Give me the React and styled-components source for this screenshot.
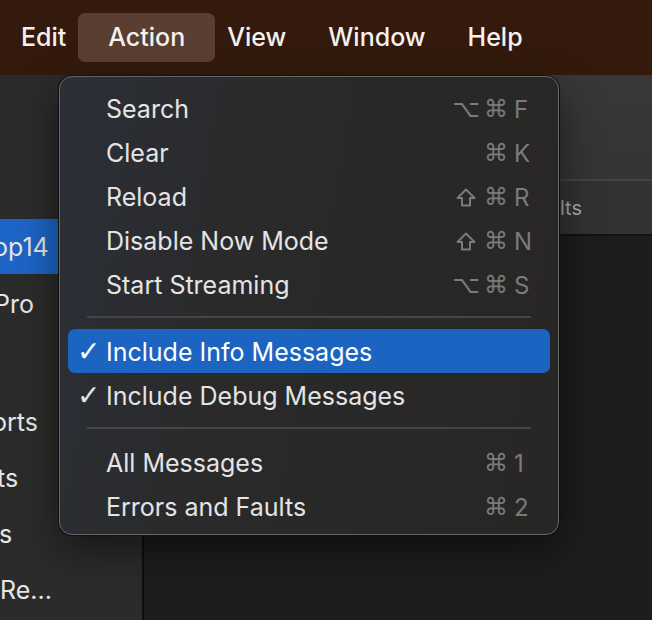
import React from 'react'
import styled, { createGlobalStyle } from 'styled-components'

const GlobalStyle = createGlobalStyle`
  body {
    margin: 0;
    background: #1d1d1d;
    font-family: Inter, "Noto Sans", "DejaVu Sans", sans-serif;
  }
`

const menuBarItems = ['Edit', 'Action', 'View', 'Window', 'Help']

const sidebarRows = [
  { label: '', height: 144 },
  { label: 'op14', height: 55, indent: -7, selected: true },
  { label: 'Pro', height: 60, indent: -6 },
  { label: '', height: 60 },
  { label: 'orts', height: 56, indent: -8 },
  { label: 'ts', height: 56, indent: -3 },
  { label: 's', height: 56, indent: -1 },
  { label: 'Re...', height: 56, indent: 0 },
]

const menuSections = [
  [
    { label: 'Search', mods: ['opt', 'cmd'], key: 'F' },
    { label: 'Clear', mods: ['cmd'], key: 'K' },
    { label: 'Reload', mods: ['shift', 'cmd'], key: 'R' },
    { label: 'Disable Now Mode', mods: ['shift', 'cmd'], key: 'N' },
    { label: 'Start Streaming', mods: ['opt', 'cmd'], key: 'S' },
  ],
  [
    { label: 'Include Info Messages', checked: true, active: true },
    { label: 'Include Debug Messages', checked: true },
  ],
  [
    { label: 'All Messages', mods: ['cmd'], key: '1' },
    { label: 'Errors and Faults', mods: ['cmd'], key: '2' },
  ],
]

const ShiftIcon = () => (
  <svg width="20" height="19" viewBox="0 0 20 19" fill="none" stroke="currentColor" strokeWidth="2" strokeLinejoin="round">
    <path d="M10 1.5 L18.5 10 H14 V17.5 H6 V10 H1.5 Z" />
  </svg>
)

const modGlyph = { opt: '⌥', cmd: '⌘' }

export default function App () {
  return (
    <>
      <GlobalStyle />
      <Screen>
        <MenuBar>
          {menuBarItems.map(item => (
            <BarItem key={item} $open={item === 'Action'}>{item}</BarItem>
          ))}
        </MenuBar>

        <Window>
          <Sidebar>
            {sidebarRows.map((row, i) => (
              <SidebarRow key={i} $height={row.height} $indent={row.indent} $selected={row.selected}>
                {row.label}
              </SidebarRow>
            ))}
          </Sidebar>
          <Main>
            <Toolbar />
            <TabRow>
              <TabLabel>Errors and Faults</TabLabel>
            </TabRow>
            <Content />
          </Main>
        </Window>

        <Menu>
          {menuSections.map((section, s) => (
            <React.Fragment key={s}>
              {s > 0 && <Separator />}
              {section.map(item => (
                <MenuItem key={item.label} $active={item.active}>
                  <Check>{item.checked ? '✓' : ''}</Check>
                  <ItemLabel>{item.label}</ItemLabel>
                  {item.key && (
                    <Shortcut>
                      {item.mods.map(m => (
                        <Mod key={m}>{m === 'shift' ? <ShiftIcon /> : modGlyph[m]}</Mod>
                      ))}
                      <Key>{item.key}</Key>
                    </Shortcut>
                  )}
                </MenuItem>
              ))}
            </React.Fragment>
          ))}
        </Menu>
      </Screen>
    </>
  )
}

const Screen = styled.div`
  position: relative;
  width: 652px;
  height: 620px;
  overflow: hidden;
  background: #1d1d1d;
`

const MenuBar = styled.div`
  height: 75px;
  display: flex;
  align-items: center;
  background: #331a0d;
`

const BarItem = styled.div`
  height: 49px;
  display: flex;
  align-items: center;
  padding: 0 ${props => props.$open ? '30px' : '21px'};
  margin: -1px ${props => props.$open ? '-9px' : '0'} 0;
  border-radius: 7px;
  background: ${props => props.$open ? '#5a3e31' : 'transparent'};
  color: #f4f1ee;
  font-size: 25px;
  font-weight: 500;
`

const Window = styled.div`
  display: grid;
  grid-template-columns: 144px 1fr;
  height: 545px;
`

const Sidebar = styled.div`
  display: flex;
  flex-direction: column;
  background: #2b2b2b;
  border-right: 2px solid #0e0e0e;
  overflow: hidden;
`

const SidebarRow = styled.div`
  flex: 0 0 ${props => props.$height}px;
  display: flex;
  align-items: center;
  white-space: nowrap;
  text-indent: ${props => props.$indent || 0}px;
  background: ${props => props.$selected ? '#1d65c6' : 'transparent'};
  color: #e6e6e6;
  font-size: 25px;
`

const Main = styled.div`
  display: flex;
  flex-direction: column;
`

const Toolbar = styled.div`
  flex: 0 0 104px;
  background: linear-gradient(180deg, #383838, #343434);
  border-bottom: 2px solid #434343;
`

const TabRow = styled.div`
  flex: 0 0 53px;
  display: flex;
  align-items: center;
  justify-content: flex-end;
  padding-right: 70px;
  background: #323232;
  border-bottom: 2px solid #121212;
`

const TabLabel = styled.span`
  color: #a8a8a8;
  font-size: 20px;
`

const Content = styled.div`
  flex: 1;
  background: #1d1d1d;
`

const Menu = styled.div`
  position: absolute;
  top: 76px;
  left: 59px;
  width: 500px;
  box-sizing: border-box;
  padding: 9px 8px 6px 8px;
  border-radius: 13px;
  border: 1px solid #666;
  box-shadow: 0 0 0 1px #111, 0 14px 40px rgba(0, 0, 0, 0.5);
  background: linear-gradient(100deg, #2b2f37 0%, #2a2a2b 35%, #282625 100%);
`

const MenuItem = styled.div`
  height: 44px;
  box-sizing: border-box;
  padding: 2px 18px 0 10px;
  display: flex;
  align-items: center;
  border-radius: 7px;
  background: ${props => props.$active ? '#1b64c2' : 'transparent'};
  color: ${props => props.$active ? '#ffffff' : '#e4e4e4'};
  font-size: 25px;
`

const Check = styled.span`
  width: 29px;
  flex: 0 0 29px;
  margin-left: -1px;
  font-family: "DejaVu Sans", sans-serif;
  font-size: 28px;
  font-weight: bold;
  line-height: 1;
`

const ItemLabel = styled.span`
  flex: 1;
  white-space: nowrap;
`

const Shortcut = styled.span`
  display: flex;
  align-items: center;
  gap: 10px;
  color: #7b7b7b;
`

const Mod = styled.span`
  width: 20px;
  height: 24px;
  display: flex;
  align-items: center;
  justify-content: center;
  font-family: "DejaVu Sans", sans-serif;
  font-size: 24px;
`

const Key = styled.span`
  width: 18px;
  margin-left: -2px;
  font-size: 24px;
`

const Separator = styled.div`
  height: 2px;
  margin: 10px 19px 11px 19px;
  background: #454545;
`
